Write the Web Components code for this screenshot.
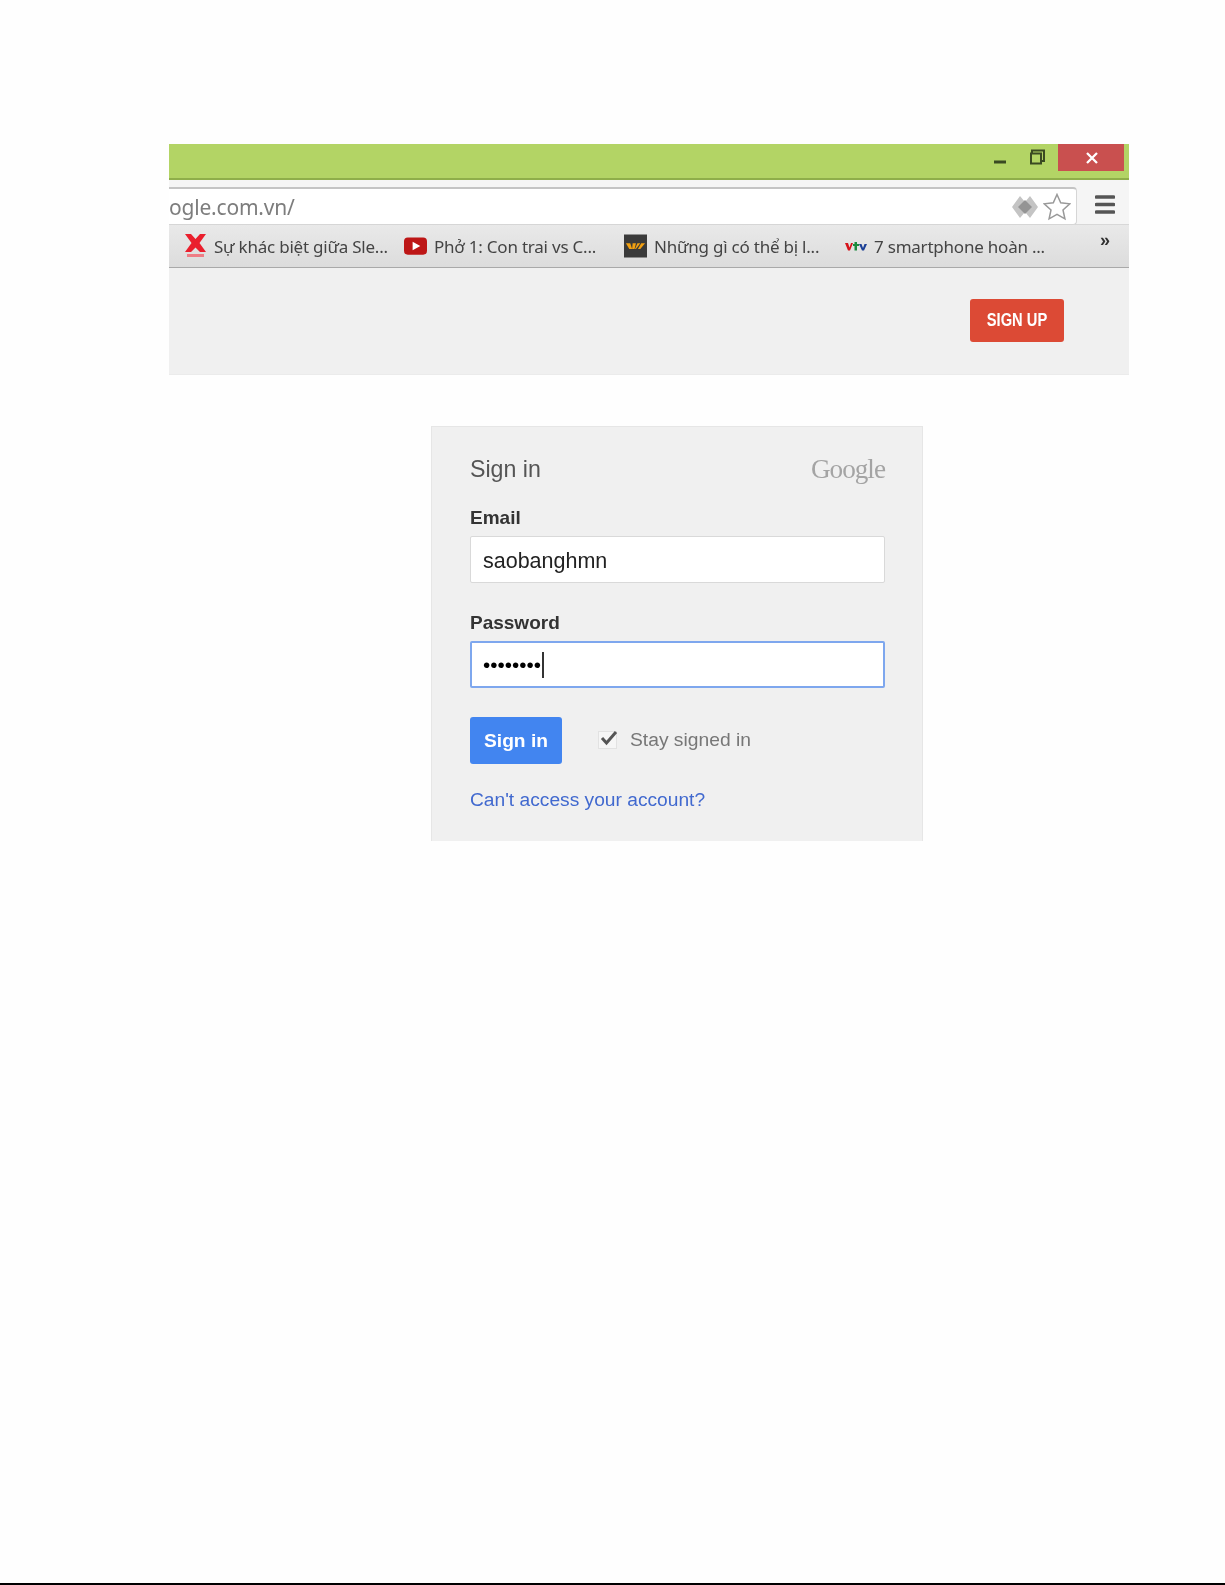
<!DOCTYPE html>
<html lang="vi">
<head>
<meta charset="utf-8">
<title>Sign in</title>
<style>
    html, body { margin: 0; padding: 0; background: #fefefe; }
</style>
</head>
<body>
<page-shell>
    <browser-window>
        <bookmark-item slot="bookmarks" icon="x">Sự khác biệt giữa Sle...</bookmark-item>
        <bookmark-item slot="bookmarks" icon="yt">Phở 1: Con trai vs C...</bookmark-item>
        <bookmark-item slot="bookmarks" icon="vn">Những gì có thể bị l...</bookmark-item>
        <bookmark-item slot="bookmarks" icon="vtv">7 smartphone hoàn ...</bookmark-item>
        <signup-bar>SIGN UP</signup-bar>
    </browser-window>
    <signin-card>
        <text-field label="Email" value="saobanghmn"></text-field>
        <text-field label="Password" value="••••••••" focused></text-field>
    </signin-card>
</page-shell>

<script>
// Page frame: white sheet with the black rule at the bottom
class PageShell extends HTMLElement {
    constructor() {
        super();
        this.attachShadow({ mode: 'open' });
        this.shadowRoot.innerHTML = `
            <style>
                :host {
                    display: flex;
                    flex-direction: column;
                    height: 1585px;
                    box-sizing: border-box;
                    padding-top: 144px;
                    font-family: "Liberation Sans", Arial, sans-serif;
                }
                .rule {
                    margin-top: auto;
                    height: 2px;
                    background: #000;
                }
            </style>
            <slot></slot>
            <div class="rule"></div>
        `;
    }
}

// Cropped Chrome window
class BrowserWindow extends HTMLElement {
    constructor() {
        super();
        this.attachShadow({ mode: 'open' });
        this.shadowRoot.innerHTML = `
            <style>
                :host {
                    display: block;
                    width: 960px;
                    margin-left: 169px;
                    background: #f0f0f0;
                    border-bottom: 1px solid #ebebeb;
                    filter: blur(.45px);
                }
                .title {
                    display: flex;
                    justify-content: flex-end;
                    height: 34px;
                    padding-right: 5px;
                    background: #b3d465;
                    border-bottom: 2px solid #8fae4a;
                }
                .ctl {
                    display: flex;
                    align-items: flex-start;
                }
                .close {
                    width: 66px;
                    height: 27px;
                    background: #c9504f;
                    display: flex;
                    align-items: center;
                    justify-content: center;
                }
                svg { display: block; }
                .toolbar {
                    display: flex;
                    height: 37px;
                    padding-top: 7px;
                    background: #f5f5f5;
                }
                .omnibox {
                    flex: none;
                    width: 907px;
                    height: 35px;
                    display: flex;
                    align-items: center;
                    background: #fff;
                    border: 1px solid #d6d6d6;
                    border-left: 0;
                    border-top: 2px solid #c4c4c4;
                    border-radius: 0 4px 4px 0;
                    color: #7d7d7d;
                    font: 21px "Noto Sans", "Open Sans", sans-serif;
                    letter-spacing: -0.2px;
                    overflow: hidden;
                }
                .url { flex: 1; }
                .menu { margin: 7px 0 0 18px; }
                .bookmarks {
                    display: flex;
                    align-items: center;
                    padding-left: 15px;
                    background: linear-gradient(#e9e9e9, #dcdcdc);
                    border-bottom: 1px solid #a9a9a9;
                    border-top: 1px solid #d8d8d8;
                    box-sizing: border-box;
                    height: 44px;
                }
                .more {
                    margin-left: auto;
                    margin-right: 19px;
                    margin-top: -11px;
                    font: bold 18px "Liberation Sans", sans-serif;
                    color: #333;
                }
            </style>
            <div class="title">
                <svg class="ctl" width="64" height="34" viewBox="0 0 64 34">
                    <rect x="0" y="16.500" width="12" height="3" fill="#3a4a22"/>
                    <path d="M38 9V6.500H50V17H47" fill="none" stroke="#3a4a22" stroke-width="2"/>
                    <rect x="37" y="9.500" width="10" height="10" fill="none" stroke="#3a4a22" stroke-width="2"/>
                </svg>
                <div class="close">
                    <svg style="margin-left:2px" width="14" height="12" viewBox="0 0 14 12"><path d="M2 1L12 11M12 1L2 11" stroke="#fff" stroke-width="2.300"/></svg>
                </div>
            </div>
            <div class="toolbar">
                <div class="omnibox">
                    <span class="url">ogle.com.vn/</span>
                    <svg width="28" height="24" viewBox="0 0 28 24">
                        <path d="M9 1L1 12L9 23L14 17L19 23L27 12L19 1L14 7Z" fill="#c4c4c4"/>
                        <path d="M14 5L21 12L14 19L7 12Z" fill="#949494"/>
                    </svg>
                    <svg style="margin:0 5px 0 4px" width="28" height="28" viewBox="0 0 28 28">
                        <path d="M14 1.500L17.700 9.800L26.800 10.800L20 16.900L21.900 25.800L14 21.300L6.100 25.800L8 16.900L1.200 10.800L10.300 9.800Z" fill="#fff" stroke="#999" stroke-width="1.500"/>
                    </svg>
                </div>
                <svg class="menu" width="20" height="21" viewBox="0 0 20 21">
                    <path d="M1.500 3H18.500M1.500 10.500H18.500M1.500 18H18.500" stroke="#555" stroke-width="3.600" stroke-linecap="round"/>
                </svg>
            </div>
            <div class="bookmarks">
                <slot name="bookmarks"></slot>
                <span class="more">»</span>
            </div>
            <slot></slot>
        `;
    }
}

// One bookmark: favicon and title
class BookmarkItem extends HTMLElement {
    static icons = {
        x: `<svg width="23" height="24" viewBox="0 0 23 24">
                <path d="M1 0H7L11.500 5L16 0H22L15.500 9L22 18H16L11.500 13.500L7 18H1L7.500 9Z" fill="#ea1f2d"/>
                <rect x="3" y="20" width="17" height="3" fill="#ef7d85"/>
            </svg>`,
        yt: `<svg width="24" height="18" viewBox="0 0 24 18">
                <rect width="24" height="18" rx="4" fill="#bd1616"/>
                <path d="M9 4.500L17 9L9 13.500Z" fill="#fff"/>
            </svg>`,
        vn: `<svg width="24" height="24" viewBox="0 0 24 24">
                <rect width="24" height="24" fill="#3a3a3a"/>
                <path d="M2 9H6.500L8.500 15H5.500ZM9 9H12.500L11 15H8.500ZM14 9H17L12.500 15H11.500ZM18 9H22L17 15H14.500Z" fill="#f2a010"/>
            </svg>`,
        vtv: `<svg width="22" height="9" viewBox="0 0 22 9">
                <path d="M0 1H3L4.500 5.500L6 1H8L5 8.500H3Z" fill="#d6141c"/>
                <path d="M9.500 0H12V2H14V4H12V8.500H9.500V4H8V2H9.500Z" fill="#1b8a3c"/>
                <path d="M14 2H16.500L18 6L19.500 2H22L19 8.500H17Z" fill="#1b3f96"/>
            </svg>`
    };

    constructor() {
        super();
        this.attachShadow({ mode: 'open' });
        const icon = BookmarkItem.icons[this.getAttribute('icon')];
        this.shadowRoot.innerHTML = `
            <style>
                :host {
                    display: flex;
                    flex: none;
                    width: 220px;
                    align-items: center;
                    gap: 7px;
                    color: #444;
                    font: 17px "Noto Sans", "Open Sans", sans-serif;
                    letter-spacing: -0.22px;
                    white-space: nowrap;
                }
                .ico {
                    width: 23px;
                    display: flex;
                    justify-content: center;
                }
            </style>
            <span class="ico">${icon}</span>
            <slot></slot>
        `;
    }
}

// Grey strip below the toolbar with the red button
class SignupBar extends HTMLElement {
    constructor() {
        super();
        this.attachShadow({ mode: 'open' });
        this.shadowRoot.innerHTML = `
            <style>
                :host {
                    display: flex;
                    justify-content: flex-end;
                    height: 106px;
                    box-sizing: border-box;
                    padding: 31px 65px 0 0;
                }
                .btn {
                    width: 94px;
                    height: 43px;
                    display: flex;
                    align-items: center;
                    justify-content: center;
                    background: #dc4a35;
                    border-radius: 3px;
                    color: #fff;
                    font: bold 17.500px "Liberation Sans", sans-serif;
                }
                span {
                    display: inline-block;
                    transform: scaleX(.84);
                    white-space: nowrap;
                }
            </style>
            <div class="btn"><span><slot></slot></span></div>
        `;
    }
}

// Labelled input look-alike
class TextField extends HTMLElement {
    constructor() {
        super();
        this.attachShadow({ mode: 'open' });
        const focused = this.hasAttribute('focused');
        this.shadowRoot.innerHTML = `
            <style>
                :host {
                    display: block;
                    margin-bottom: 28px;
                }
                label {
                    display: block;
                    height: 24px;
                    line-height: 24px;
                    margin-bottom: 6px;
                    color: #333;
                    font-weight: bold;
                    font-size: 19px;
                }
                .box {
                    display: flex;
                    align-items: center;
                    height: 47px;
                    box-sizing: border-box;
                    padding: 3px 0 0 12px;
                    background: #fff;
                    border: 1px solid #d9d9d9;
                    border-radius: 2px;
                    color: #222;
                    font-size: 21.500px;
                }
                .box.focused {
                    border: 2px solid #7ea7ee;
                    padding: 0 0 0 11px;
                    font-size: 20.700px;
                    color: #000;
                }
                .caret {
                    width: 2px;
                    height: 26px;
                    margin-left: 1px;
                    background: #333;
                }
            </style>
            <label>${this.getAttribute('label')}</label>
            <div class="box ${focused ? 'focused' : ''}">
                <span>${this.getAttribute('value')}</span>
                ${focused ? '<span class="caret"></span>' : ''}
            </div>
        `;
    }
}

// Sign in card
class SigninCard extends HTMLElement {
    constructor() {
        super();
        this.attachShadow({ mode: 'open' });
        this.shadowRoot.innerHTML = `
            <style>
                :host {
                    display: block;
                    width: 492px;
                    box-sizing: border-box;
                    margin: 51px 0 0 431px;
                    padding: 22px 37px 29px 38px;
                    background: #f0f0f0;
                    border: 1px solid #e6e6e6;
                    border-bottom: 0;
                    filter: blur(.45px);
                }
                .head {
                    display: flex;
                    justify-content: space-between;
                    align-items: center;
                    height: 40px;
                    margin-bottom: 17px;
                }
                h1 {
                    margin: 0;
                    font-weight: normal;
                    font-size: 23.200px;
                    color: #555;
                }
                .logo {
                    font: 27.200px "Liberation Serif", serif;
                    letter-spacing: -1px;
                    color: #a4a4a4;
                }
                .actions {
                    display: flex;
                    align-items: center;
                    margin-top: 29px;
                }
                button {
                    width: 92px;
                    height: 47px;
                    padding: 0;
                    border: 0;
                    border-radius: 3px;
                    background: #4285f0;
                    color: #fff;
                    font: bold 19.200px "Liberation Sans", sans-serif;
                }
                .check {
                    width: 19px;
                    height: 18px;
                    margin: -2px 13px 0 36px;
                    position: relative;
                    background: #f6f6f6;
                    border: 1px solid #e2e2e2;
                    box-sizing: border-box;
                }
                .check svg {
                    position: absolute;
                    left: 0;
                    top: -4px;
                }
                .stay {
                    margin-top: -1px;
                    color: #777;
                    font-size: 19.250px;
                }
                a {
                    display: block;
                    margin-top: 24px;
                    line-height: 24px;
                    color: #4169cf;
                    text-decoration: none;
                    font-size: 19.200px;
                }
            </style>
            <div class="head">
                <h1>Sign in</h1>
                <span class="logo">Google</span>
            </div>
            <slot></slot>
            <div class="actions">
                <button>Sign in</button>
                <span class="check">
                    <svg width="20" height="19" viewBox="0 0 20 19"><path d="M3 10L7.500 15L17 4" fill="none" stroke="#555" stroke-width="3"/></svg>
                </span>
                <span class="stay">Stay signed in</span>
            </div>
            <a href="#">Can't access your account?</a>
        `;
    }
}

customElements.define('page-shell', PageShell);
customElements.define('browser-window', BrowserWindow);
customElements.define('bookmark-item', BookmarkItem);
customElements.define('signup-bar', SignupBar);
customElements.define('text-field', TextField);
customElements.define('signin-card', SigninCard);
</script>
</body>
</html>
